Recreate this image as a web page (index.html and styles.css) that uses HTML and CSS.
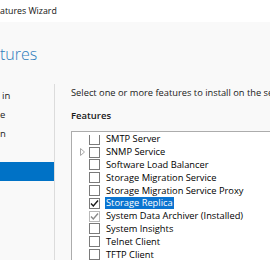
FILE: index.html
```html
<!DOCTYPE html>
<html>
<head>
<meta charset="utf-8">
<link rel="stylesheet" href="styles.css">
</head>
<body>
<div class="window">
  <div class="titlebar"><span class="title">atures Wizard</span></div>
  <div class="header"><h1 class="heading">tures</h1></div>
  <div class="main">
    <nav class="nav">
      <div class="nav-item nav-item--first">in</div>
      <div class="nav-item">e</div>
      <div class="nav-item">n</div>
      <div class="nav-item"></div>
      <div class="nav-item nav-item--active"></div>
    </nav>
    <div class="content">
      <p class="intro">Select one or more features to install on the se</p>
      <div class="label">Features</div>
      <div class="listbox">
        <ul class="tree">
          <li class="row row--first"><span class="expander"></span><span class="check"></span><span class="text">SMTP Server</span></li>
          <li class="row"><span class="expander"><svg width="5" height="8" viewBox="0 0 5 8"><path d="M0.5 0.5 L4.5 4 L0.5 7.5 Z" fill="none" stroke="#a6a6a6" stroke-width="1"/></svg></span><span class="check"></span><span class="text">SNMP Service</span></li>
          <li class="row"><span class="expander"></span><span class="check"></span><span class="text">Software Load Balancer</span></li>
          <li class="row"><span class="expander"></span><span class="check"></span><span class="text">Storage Migration Service</span></li>
          <li class="row"><span class="expander"></span><span class="check"></span><span class="text">Storage Migration Service Proxy</span></li>
          <li class="row"><span class="expander"></span><span class="check check--on"><svg width="11" height="11" viewBox="0 0 11 11"><path d="M2 5.5 L4.3 8 L9 2.5" fill="none" stroke="#1a1a1a" stroke-width="1.4"/></svg></span><span class="text text--selected">Storage Replica</span></li>
          <li class="row"><span class="expander"></span><span class="check check--off"><svg width="11" height="11" viewBox="0 0 11 11"><path d="M2 5.5 L4.3 8 L9 2.5" fill="none" stroke="#8a8a8a" stroke-width="1.4"/></svg></span><span class="text">System Data Archiver (Installed)</span></li>
          <li class="row"><span class="expander"></span><span class="check"></span><span class="text">System Insights</span></li>
          <li class="row"><span class="expander"></span><span class="check"></span><span class="text">Telnet Client</span></li>
          <li class="row"><span class="expander"></span><span class="check"></span><span class="text">TFTP Client</span></li>
        </ul>
      </div>
    </div>
  </div>
</div>
</body>
</html>
```
FILE: styles.css
```css
html, body {
  margin: 0;
  padding: 0;
}
body {
  width: 270px;
  height: 260px;
  overflow: hidden;
  background: #f9f9f9;
  font-family: "Open Sans", "Noto Sans", sans-serif;
  color: #000;
}
.window {
  display: flex;
  flex-direction: column;
  height: 260px;
}
.titlebar {
  height: 22px;
  background: #ffffff;
  display: flex;
  align-items: center;
  padding-bottom: 1px;
  box-sizing: border-box;
}
.title {
  font-size: 8.8px;
  color: #111;
  white-space: nowrap;
}
.header {
  height: 62px;
  box-sizing: border-box;
  padding-top: 22px;
}
.heading {
  margin: 0;
  font-size: 16px;
  font-weight: 300;
  line-height: 20px;
  color: #2b7bbb;
  white-space: nowrap;
}
.main {
  flex: 1;
  display: flex;
  min-height: 0;
}
.nav {
  width: 55px;
  flex: none;
  border-right: 1px solid #dcdcdc;
  padding-top: 2px;
  box-sizing: border-box;
}
.nav-item {
  height: 19px;
  line-height: 19px;
  font-size: 9.5px;
  color: #1a1a1a;
  white-space: nowrap;
}
.nav-item--first {
  padding-left: 2px;
}
.nav-item--active {
  background: #0072c6;
}
.content {
  flex: 1;
  min-width: 0;
  padding-left: 16px;
  overflow: hidden;
}
.intro {
  margin: 2px 0 0;
  font-size: 9.3px;
  line-height: 14px;
  white-space: nowrap;
  color: #1a1a1a;
}
.label {
  margin-top: 9px;
  font-size: 9.5px;
  font-weight: 600;
  line-height: 14px;
  color: #1a1a1a;
}
.listbox {
  margin-top: 8px;
  border: 1px solid #acacac;
  border-right: none;
  background: #ffffff;
  height: 200px;
  padding-top: 3px;
  box-sizing: border-box;
  overflow: hidden;
}
.tree {
  list-style: none;
  margin: 0;
  padding: 0;
  height: 100%;
  overflow: hidden;
}
.row {
  height: 12.8px;
  display: flex;
  align-items: center;
  white-space: nowrap;
  font-size: 9.3px;
}
.row--first {
  margin-top: -2px;
}
.expander {
  width: 17px;
  flex: none;
  display: flex;
  align-items: center;
  padding-left: 8px;
  box-sizing: border-box;
}
.check {
  width: 11px;
  height: 11px;
  flex: none;
  border: 1px solid #7a7a7a;
  box-sizing: border-box;
  background: #fff;
  margin-right: 5px;
  position: relative;
}
.check svg {
  position: absolute;
  left: -1px;
  top: -1px;
}
.check--on {
  border-color: #7a7a7a;
}
.check--off {
  border-color: #b8b8b8;
}
.text {
  line-height: 12px;
  padding: 0 1px;
}
.text--selected {
  background: #0a74d0;
  color: #ffffff;
}
```
